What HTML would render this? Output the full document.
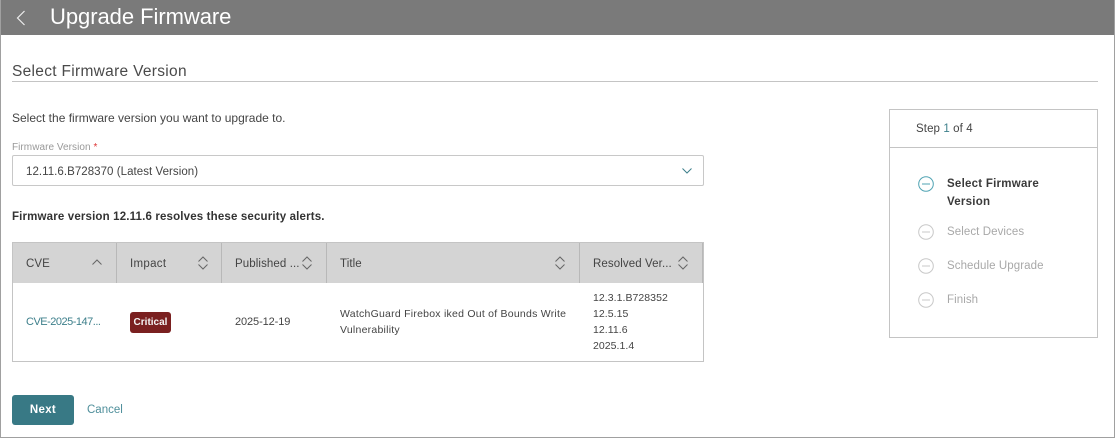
<!DOCTYPE html>
<html><head><meta charset="utf-8">
<style>
html,body{margin:0;padding:0;background:#fff}
#p{position:relative;width:1115px;height:438px;overflow:hidden;background:#fff;font-family:"Liberation Sans",sans-serif;color:#444}
#p div,#p svg{position:absolute}
.t{white-space:nowrap;font-size:11.5px;line-height:16px;letter-spacing:.2px;color:#444}
.g{color:#a8a8a8;font-size:11.5px;letter-spacing:.08px}
.v{background:#b8b8b8;width:1px;top:243px;height:40px}
.h{letter-spacing:.1px;top:256px}
</style></head><body><div id="p">
<div style="left:0;top:0;width:1115px;height:35px;background:#7a7a7a"></div>
<div style="left:0;top:0;width:1px;height:438px;background:#a0a0a0"></div>
<div style="left:1114px;top:0;width:1px;height:438px;background:#a0a0a0"></div>
<div style="left:0;top:437px;width:1115px;height:1px;background:#a0a0a0"></div>
<svg style="left:14px;top:8px" width="16" height="20" viewBox="0 0 16 20"><path d="M10.5 3 L3.5 10 L10.5 17" fill="none" stroke="#eee" stroke-width="1.2"/></svg>
<div class="t" style="left:50px;top:3px;font-size:22px;line-height:28px;color:#fff;letter-spacing:-.05px">Upgrade Firmware</div>

<div class="t" style="left:12px;top:62px;font-size:15.5px;line-height:20px;letter-spacing:.3px;color:#4a4a4a">Select Firmware Version</div>
<div style="left:12px;top:81px;width:1086px;height:1px;background:#c4c4c4"></div>
<div class="t" style="left:12px;top:110px;font-size:12px;letter-spacing:0">Select the firmware version you want to upgrade to.</div>
<div class="t" style="left:12px;top:140px;font-size:10px;letter-spacing:.05px;color:#999">Firmware Version <span style="color:#d33">*</span></div>
<div style="left:12px;top:155px;width:690px;height:29px;border:1px solid #c8c8c8;border-radius:2px"></div>
<div class="t" style="left:26px;top:164px;font-size:11.5px;letter-spacing:.05px">12.11.6.B728370 (Latest Version)</div>
<svg style="left:680px;top:166px" width="14" height="10" viewBox="0 0 14 10"><path d="M2.5 2.5 L7 7 L11.5 2.5" fill="none" stroke="#3d7f8b" stroke-width="1"/></svg>
<div class="t" style="left:12px;top:209px;font-size:11.5px;font-weight:bold;letter-spacing:.16px;color:#333">Firmware version 12.11.6 resolves these security alerts.</div>

<div style="left:12px;top:242px;width:690px;height:118px;border:1px solid #c4c4c4"></div>
<div style="left:13px;top:243px;width:690px;height:40px;background:#d4d4d4"></div>
<div class="v" style="left:116px"></div>
<div class="v" style="left:221px"></div>
<div class="v" style="left:326px"></div>
<div class="v" style="left:579px"></div>
<div class="v" style="left:702px"></div>
<div class="t h" style="left:26px">CVE</div>
<svg style="left:90px;top:258px" width="14" height="9" viewBox="0 0 14 9"><path d="M2.5 6.5 L7 2 L11.5 6.5" fill="none" stroke="#666" stroke-width="1"/></svg>
<div class="t h" style="left:130px;letter-spacing:.3px">Impact</div>
<div class="t h" style="left:235px">Published ...</div>
<div class="t h" style="left:340px">Title</div>
<div class="t h" style="left:593px">Resolved Ver...</div>
<svg style="left:196px;top:255px" width="14" height="16" viewBox="0 0 14 16"><path d="M2.5 6.5 L7 2 L11.5 6.5 M2.5 9.5 L7 14 L11.5 9.5" fill="none" stroke="#666" stroke-width="1"/></svg>
<svg style="left:300px;top:255px" width="14" height="16" viewBox="0 0 14 16"><path d="M2.5 6.5 L7 2 L11.5 6.5 M2.5 9.5 L7 14 L11.5 9.5" fill="none" stroke="#666" stroke-width="1"/></svg>
<svg style="left:553px;top:255px" width="14" height="16" viewBox="0 0 14 16"><path d="M2.5 6.5 L7 2 L11.5 6.5 M2.5 9.5 L7 14 L11.5 9.5" fill="none" stroke="#666" stroke-width="1"/></svg>
<svg style="left:676px;top:255px" width="14" height="16" viewBox="0 0 14 16"><path d="M2.5 6.5 L7 2 L11.5 6.5 M2.5 9.5 L7 14 L11.5 9.5" fill="none" stroke="#666" stroke-width="1"/></svg>

<div class="t" style="left:26px;top:314px;color:#3d7f8b;font-size:11px;letter-spacing:-.5px">CVE-2025-147...</div>
<div class="t" style="left:130px;top:312px;width:41px;height:21px;line-height:21px;background:#7a2020;border-radius:3px;color:#f4f4f4;font-size:10px;font-weight:bold;text-align:center;letter-spacing:0">Critical</div>
<div class="t" style="left:235px;top:314px;font-size:11px;letter-spacing:-.1px">2025-12-19</div>
<div class="t" style="left:340px;top:306px;font-size:10.5px;letter-spacing:.24px">WatchGuard Firebox iked Out of Bounds Write</div>
<div class="t" style="left:340px;top:322px;font-size:10.5px;letter-spacing:.24px">Vulnerability</div>
<div class="t" style="left:593px;top:290px;font-size:10.5px;letter-spacing:.05px">12.3.1.B728352</div>
<div class="t" style="left:593px;top:306px;font-size:10.5px;letter-spacing:.05px">12.5.15</div>
<div class="t" style="left:593px;top:322px;font-size:10.5px;letter-spacing:.05px">12.11.6</div>
<div class="t" style="left:593px;top:338px;font-size:10.5px;letter-spacing:.05px">2025.1.4</div>

<div class="t" style="left:12px;top:395px;width:62px;height:30px;line-height:30px;background:#387985;border-radius:3px;color:#fff;font-weight:bold;text-align:center;font-size:11.5px;letter-spacing:.3px">Next</div>
<div class="t" style="left:87px;top:402px;color:#4f8f9b;letter-spacing:0">Cancel</div>

<div style="left:889px;top:109px;width:207px;height:227px;border:1px solid #c4c4c4"></div>
<div style="left:889px;top:147px;width:209px;height:1px;background:#c4c4c4"></div>
<div class="t" style="left:916px;top:121px;letter-spacing:.1px">Step <span style="color:#3d7f8b">1</span> of 4</div>
<svg style="left:917px;top:175px" width="18" height="18" viewBox="0 0 18 18"><circle cx="9" cy="9" r="7.3" fill="none" stroke="#4fa3b3" stroke-width="1"/><path d="M5 9 H13" stroke="#4fa3b3" stroke-width="1"/></svg>
<svg style="left:917px;top:223px" width="18" height="18" viewBox="0 0 18 18"><circle cx="9" cy="9" r="7.3" fill="none" stroke="#c8c8c8" stroke-width="1"/><path d="M5 9 H13" stroke="#c8c8c8" stroke-width="1"/></svg>
<svg style="left:917px;top:257px" width="18" height="18" viewBox="0 0 18 18"><circle cx="9" cy="9" r="7.3" fill="none" stroke="#c8c8c8" stroke-width="1"/><path d="M5 9 H13" stroke="#c8c8c8" stroke-width="1"/></svg>
<svg style="left:917px;top:291px" width="18" height="18" viewBox="0 0 18 18"><circle cx="9" cy="9" r="7.3" fill="none" stroke="#c8c8c8" stroke-width="1"/><path d="M5 9 H13" stroke="#c8c8c8" stroke-width="1"/></svg>
<div class="t" style="left:947px;top:176px;font-weight:bold;color:#3a3a3a;letter-spacing:.25px">Select Firmware</div>
<div class="t" style="left:947px;top:194px;font-weight:bold;color:#3a3a3a;letter-spacing:.25px">Version</div>
<div class="t g" style="left:947px;top:224px">Select Devices</div>
<div class="t g" style="left:947px;top:258px">Schedule Upgrade</div>
<div class="t g" style="left:947px;top:292px">Finish</div>
</div></body></html>
